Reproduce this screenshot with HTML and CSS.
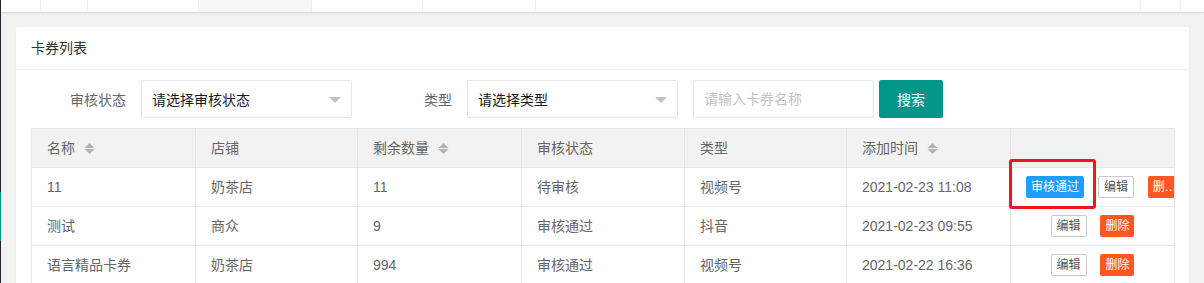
FILE: index.html
```html
<!DOCTYPE html>
<html lang="zh-CN">
<head>
<meta charset="utf-8">
<title>卡券列表</title>
<link rel="stylesheet" href="styles.css">
</head>
<body>
<div class="app">
  <aside class="side">
    <span class="side-active"></span>
  </aside>
  <div class="main">
    <div class="tabs">
      <span class="tab t1"></span>
      <span class="tab t2"></span>
      <span class="tab t3"></span>
      <span class="tab t4 on"></span>
      <span class="tab t5"></span>
      <span class="tab t6"></span>
      <span class="tab t7"></span>
      <span class="tab t8"></span>
      <span class="tab t9"></span>
    </div>
    <div class="content">
      <div class="card">
        <div class="card-header">卡券列表</div>
        <div class="card-body">
          <div class="filters">
            <label class="f-label">审核状态</label>
            <div class="f-select"><span>请选择审核状态</span><i class="edge"></i></div>
            <label class="f-label f-gap">类型</label>
            <div class="f-select"><span>请选择类型</span><i class="edge"></i></div>
            <input class="f-input" type="text" placeholder="请输入卡券名称">
            <button class="f-btn" type="button">搜索</button>
          </div>
          <div class="table-wrap">
            <table class="grid">
              <colgroup>
                <col class="c1"><col class="c2"><col class="c3"><col class="c4"><col class="c5"><col class="c6"><col class="c7">
              </colgroup>
              <thead>
                <tr>
                  <th>名称<svg class="sort" width="11" height="11" viewBox="0 0 11 11"><polygon points="0.5,5 5.5,0 10.5,5" /><polygon points="0.5,6 5.5,11 10.5,6" /></svg></th>
                  <th>店铺</th>
                  <th>剩余数量<svg class="sort" width="11" height="11" viewBox="0 0 11 11"><polygon points="0.5,5 5.5,0 10.5,5" /><polygon points="0.5,6 5.5,11 10.5,6" /></svg></th>
                  <th>审核状态</th>
                  <th>类型</th>
                  <th>添加时间<svg class="sort" width="11" height="11" viewBox="0 0 11 11"><polygon points="0.5,5 5.5,0 10.5,5" /><polygon points="0.5,6 5.5,11 10.5,6" /></svg></th>
                  <th></th>
                </tr>
              </thead>
              <tbody>
                <tr>
                  <td>11</td>
                  <td>奶茶店</td>
                  <td>11</td>
                  <td>待审核</td>
                  <td>视频号</td>
                  <td>2021-02-23 11:08</td>
                  <td class="ops ops-over"><span class="btn btn-blue">审核通过</span> <span class="btn btn-line">编辑</span> <span class="btn btn-red btn-cut">删除</span></td>
                </tr>
                <tr>
                  <td>测试</td>
                  <td>商众</td>
                  <td>9</td>
                  <td>审核通过</td>
                  <td>抖音</td>
                  <td>2021-02-23 09:55</td>
                  <td class="ops"><span class="btn btn-line">编辑</span> <span class="btn btn-red">删除</span></td>
                </tr>
                <tr>
                  <td>语言精品卡券</td>
                  <td>奶茶店</td>
                  <td>994</td>
                  <td>审核通过</td>
                  <td>视频号</td>
                  <td>2021-02-22 16:36</td>
                  <td class="ops"><span class="btn btn-line">编辑</span> <span class="btn btn-red">删除</span></td>
                </tr>
              </tbody>
            </table>
            <div class="mark"></div>
          </div>
        </div>
      </div>
    </div>
  </div>
</div>
</body>
</html>
```
FILE: styles.css
```css
html, body {
  margin: 0;
  padding: 0;
  height: 100%;
  overflow: hidden;
}
body {
  font-family: "Liberation Sans", "Noto Sans CJK SC", sans-serif;
  font-size: 14px;
  color: #666;
  background: #f2f2f2;
}
.app {
  display: flex;
  min-height: 100%;
}
.side {
  width: 1px;
  flex: none;
  background: #23262e;
  display: flex;
  flex-direction: column;
}
.side-active {
  margin-top: 192px;
  height: 49px;
  background: #009688;
}
.main {
  flex: 1;
  min-width: 0;
  display: flex;
  flex-direction: column;
}
.tabs {
  height: 12px;
  display: flex;
  background: #fff;
  box-shadow: 0 1px 2px rgba(0, 0, 0, 0.12);
  position: relative;
  z-index: 1;
}
.tab {
  border-right: 1px solid #f0f0f0;
  box-sizing: border-box;
  flex: none;
}
.t1 { width: 40px; }
.t2 { width: 47px; }
.t3 { width: 111px; }
.t4 { width: 113px; }
.t5 { width: 111px; }
.t6 { width: 113px; }
.t7 { flex: 1; }
.t8 { width: 40px; }
.t9 { width: 23px; border-right: 0; }
.tab.on { background: #f6f6f6; }
.content {
  padding: 15px;
}
.card {
  background: #fff;
  border-radius: 2px;
  box-shadow: 0 1px 2px rgba(0, 0, 0, 0.05);
}
.card-header {
  height: 42px;
  line-height: 42px;
  padding: 0 15px;
  border-bottom: 1px solid #f2f2f2;
  color: #333;
}
.card-body {
  padding: 10px 15px 15px;
}
.filters {
  display: flex;
  align-items: center;
  height: 38px;
}
.f-label {
  width: 110px;
  box-sizing: border-box;
  padding-right: 15px;
  text-align: right;
  color: #666;
  flex: none;
}
.f-gap {
  margin-left: 5px;
}
.f-select {
  width: 211px;
  height: 38px;
  box-sizing: border-box;
  border: 1px solid #e6e6e6;
  border-radius: 2px;
  display: flex;
  align-items: center;
  justify-content: space-between;
  padding: 0 10px 0 10px;
  color: #1a1a1a;
  flex: none;
}
.edge {
  width: 0;
  height: 0;
  border-style: solid;
  border-width: 6px 6px 0 6px;
  border-color: #c2c2c2 transparent transparent transparent;
  margin-top: 1px;
}
.f-input {
  margin-left: 15px;
  width: 181px;
  height: 38px;
  box-sizing: border-box;
  border: 1px solid #e6e6e6;
  border-radius: 2px;
  padding: 0 10px;
  font: inherit;
  color: #333;
  outline: none;
  flex: none;
}
.f-input::placeholder {
  color: #c2c2c2;
}
.f-btn {
  margin-left: 5px;
  width: 64px;
  height: 38px;
  border: 0;
  border-radius: 2px;
  background: #009688;
  color: #fff;
  font: inherit;
  padding: 0;
  flex: none;
}
.table-wrap {
  position: relative;
  margin-top: 10px;
  width: 1143px;
}
.grid {
  width: 1143px;
  table-layout: fixed;
  border-collapse: collapse;
  border: 1px solid #e6e6e6;
}
.c1 { width: 164px; }
.c2 { width: 162px; }
.c3 { width: 164px; }
.c4 { width: 163px; }
.c5 { width: 162px; }
.c6 { width: 164px; }
.c7 { width: 164px; }
.grid th,
.grid td {
  border: 1px solid #e6e6e6;
  height: 39px;
  padding: 0 15px;
  line-height: 20px;
  text-align: left;
  font-weight: normal;
  color: #666;
  white-space: nowrap;
  overflow: hidden;
  box-sizing: border-box;
}
.grid th {
  background: #f2f2f2;
}
.sort {
  margin-left: 9px;
  vertical-align: -1px;
  fill: #b2b2b2;
}
.grid td.ops {
  text-align: center;
  font-size: 14px;
}
.grid td.ops-over {
  text-align: left;
}
.btn {
  display: inline-block;
  height: 22px;
  line-height: 22px;
  padding: 0 5px;
  font-size: 12px;
  border-radius: 2px;
  color: #fff;
  vertical-align: middle;
  box-sizing: border-box;
  margin-left: 10px;
}
.btn:first-child {
  margin-left: 0;
}
.btn-blue { background: #1e9fff; }
.btn-red { background: #ff5722; }
.btn-line {
  background: #fff;
  border: 1px solid #c9c9c9;
  line-height: 20px;
  color: #555;
}
.btn-cut {
  max-width: 27px;
  padding-right: 0;
  overflow: hidden;
  text-overflow: ellipsis;
  white-space: nowrap;
  font-family: "DejaVu Sans", "Noto Sans CJK SC", sans-serif;
}
.mark {
  position: absolute;
  left: 978px;
  top: 31px;
  width: 87px;
  height: 50px;
  box-sizing: border-box;
  border: 3px solid #f0141e;
  border-radius: 3px;
}
```
